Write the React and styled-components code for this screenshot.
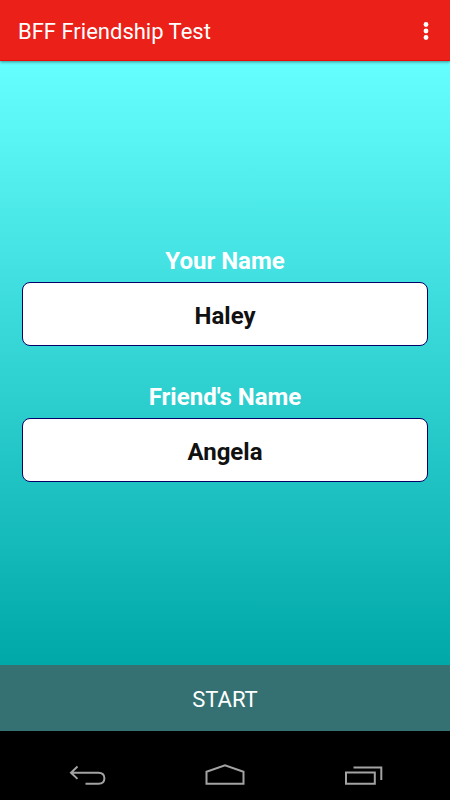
import React, { useState } from 'react';
import styled, { createGlobalStyle } from 'styled-components';

const GlobalStyle = createGlobalStyle`
    * {
        box-sizing: border-box;
    }
    body {
        margin: 0;
        background-color: #000;
        font-family: Roboto, 'Liberation Sans', sans-serif;
    }
    button, input {
        font-family: inherit;
        border: none;
        outline: none;
    }
    button {
        cursor: pointer;
    }
`;

function Header() {
  return (
    <HeaderStyled>
        <h1>BFF Friendship Test</h1>
        <button type="button" aria-label="More options">
            <svg width="6" height="20" viewBox="0 0 6 20" fill="#fff">
                <circle cx="3" cy="3.5" r="2.4" />
                <circle cx="3" cy="10" r="2.4" />
                <circle cx="3" cy="16.5" r="2.4" />
            </svg>
        </button>
    </HeaderStyled>
  )
}

function NameField({ id, label, value, onChange }) {
  return (
    <NameFieldStyled>
        <label htmlFor={id}>{label}</label>
        <input id={id} type="text" value={value} onChange={(e) => onChange(e.target.value)} />
    </NameFieldStyled>
  )
}

function NavBar() {
  return (
    <NavBarStyled>
        <button type="button" aria-label="Back">
            <svg width="40" height="24" viewBox="0 0 40 24">
                <path d="M10.5 3.5 L4 9.7 L10.5 15.9 M4 9.7 H31.5 Q37.4 9.7 37.4 15.2 Q37.4 20.7 31.5 20.7 H18.5" />
            </svg>
        </button>
        <button type="button" aria-label="Home">
            <svg width="40" height="24" viewBox="0 0 40 24">
                <path d="M1.5 20.7 V8.7 L20 2.3 L38.5 8.7 V20.7 Z" />
            </svg>
        </button>
        <button type="button" aria-label="Recent apps">
            <svg width="40" height="24" viewBox="0 0 40 24">
                <path d="M3 9.5 H31.8 V20.7 H3 Z M10.5 4.4 H38.3 V17" />
            </svg>
        </button>
    </NavBarStyled>
  )
}

function App() {
  const [yourName, setYourName] = useState('Haley');
  const [friendName, setFriendName] = useState('Angela');

  return (
    <ScreenStyled>
        <GlobalStyle />
        <Header />
        <FormStyled id="names" onSubmit={(e) => e.preventDefault()}>
            <NameField id="your-name" label="Your Name" value={yourName} onChange={setYourName} />
            <NameField id="friend-name" label="Friend's Name" value={friendName} onChange={setFriendName} />
        </FormStyled>
        <StartButton type="submit" form="names">START</StartButton>
        <NavBar />
    </ScreenStyled>
  )
}

const ScreenStyled = styled.div`
    display: flex;
    flex-direction: column;
    min-height: 100vh;
`;

const HeaderStyled = styled.header`
    position: relative;
    display: flex;
    align-items: center;
    justify-content: space-between;
    height: 61px;
    padding: 2px 16px 0 18px;
    background-color: #ea2019;
    border-bottom: 1px solid #ea0a0a;
    box-shadow: 0 1px 3px rgba(0, 0, 0, .45);
    h1 {
        margin: 0;
        padding-top: 2px;
        color: #fff;
        font-size: 22px;
        font-weight: 400;
        line-height: 28px;
    }
    button {
        display: flex;
        padding: 5px;
        background: none;
    }
`;

const FormStyled = styled.form`
    flex: 1;
    display: flex;
    flex-direction: column;
    justify-content: center;
    gap: 34px;
    padding: 0 22px;
    background: linear-gradient(#66ffff, #00a8a8);
`;

const NameFieldStyled = styled.div`
    display: flex;
    flex-direction: column;
    gap: 4px;
    text-align: center;
    font-size: 24px;
    font-weight: 700;
    label {
        color: #fff;
        line-height: 34px;
    }
    input {
        width: 100%;
        height: 64px;
        padding: 3px 16px 0;
        color: #111;
        background-color: #fff;
        border: 1px solid #000066;
        border-radius: 8px;
        font-size: inherit;
        font-weight: inherit;
        text-align: center;
    }
`;

const StartButton = styled.button`
    height: 66px;
    padding: 3px 16px 0;
    color: #fff;
    background-color: #357172;
    font-size: 22px;
    line-height: 28px;
`;

const NavBarStyled = styled.nav`
    display: flex;
    justify-content: center;
    gap: 98px;
    height: 69px;
    padding-top: 32px;
    background-color: #000;
    button {
        display: flex;
        align-self: flex-start;
        padding: 0;
        background: none;
    }
    svg {
        fill: none;
        stroke: #a3a3a3;
        stroke-width: 2;
    }
`;

export default App;
